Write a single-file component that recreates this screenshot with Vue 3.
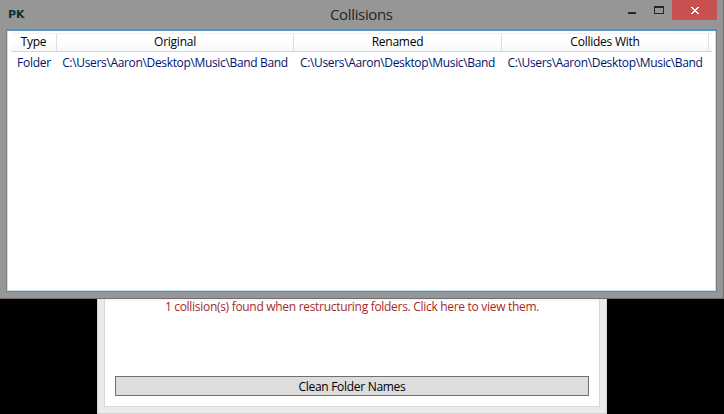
<script setup>
const columns = [
  { title: 'Type', key: 'type', cls: 'c-type' },
  { title: 'Original', key: 'original', cls: 'c-orig' },
  { title: 'Renamed', key: 'renamed', cls: 'c-ren' },
  { title: 'Collides With', key: 'collides', cls: 'c-col' },
]
const rows = [
  {
    type: 'Folder',
    original: 'C:\\Users\\Aaron\\Desktop\\Music\\Band Band',
    renamed: 'C:\\Users\\Aaron\\Desktop\\Music\\Band',
    collides: 'C:\\Users\\Aaron\\Desktop\\Music\\Band',
  },
]
</script>

<template>
  <div class="desktop">
    <section class="window">
      <header class="titlebar">
        <span class="logo">PK</span>
        <h1 class="title">Collisions</h1>
        <div class="controls">
          <svg class="wbtn" width="44" height="20" shape-rendering="crispEdges">
            <rect x="0" y="12" width="8" height="2" fill="#252525" />
            <path d="M26 6h10v8h-10zM27 8v5h8v-5z" fill="#252525" fill-rule="evenodd" />
          </svg>
          <button class="close" aria-label="Close">
            <svg width="8" height="7" shape-rendering="crispEdges" fill="#fff">
              <path d="M0 0h2v1h1v1h2v-1h1v-1h2v1h-1v1h-1v1h-1v1h1v1h1v1h1v1h-2v-1h-1v-1h-2v1h-1v1h-2v-1h1v-1h1v-1h1v-1h-1v-1h-1v-1h-1z" />
            </svg>
          </button>
        </div>
      </header>
      <div class="client">
        <div class="row head">
          <div v-for="c in columns" :key="c.key" class="cell" :class="c.cls"><span>{{ c.title }}</span></div>
        </div>
        <div v-for="(r, i) in rows" :key="i" class="row data">
          <div v-for="c in columns" :key="c.key" class="cell" :class="c.cls"><span>{{ r[c.key] }}</span></div>
        </div>
      </div>
    </section>
    <section class="back">
      <div class="panel">
        <p class="warning">1 collision(s) found when restructuring folders. Click here to view them.</p>
        <button class="clean"><span>Clean Folder Names</span></button>
      </div>
    </section>
  </div>
</template>

<style>
body {
  margin: 0;
  background: #000;
}
</style>

<style scoped>
.desktop {
  width: 724px;
  height: 414px;
  overflow: hidden;
  background: #000;
  font: 12px/16px "Open Sans", "Noto Sans", sans-serif;
  color: #000;
  display: flex;
  flex-direction: column;
}
.desktop * {
  box-sizing: border-box;
}
.window {
  height: 299px;
  flex: none;
  background: #969696;
  border-right: 1px solid #6e6e6e;
  border-bottom: 1px solid #6e6e6e;
  padding: 0 6px;
}
.titlebar {
  height: 29px;
  display: grid;
  grid-template-columns: 324px 1fr 89px;
  align-items: start;
}
.logo {
  padding: 6px 0 0 2px;
  font: 700 11px/18px "DejaVu Sans", sans-serif;
  color: #0a3232;
}
.title {
  margin: 0;
  padding-top: 3px;
  font-weight: 400;
  font-size: 15px;
  line-height: 22px;
  letter-spacing: -0.35px;
  color: #252525;
}
.controls {
  display: flex;
}
.wbtn {
  flex: none;
}
.close {
  width: 45px;
  height: 20px;
  flex: none;
  border: 0;
  padding: 0 0 0 1px;
  background: #c75050;
  display: flex;
  align-items: center;
  justify-content: center;
}
.client {
  height: 263px;
  border: 1px solid #7c7f84;
  background: #fff;
  box-shadow: inset 0 1px #569dcf, inset 0 0 0 1px #c5e0f0;
  padding: 3px 4px;
}
.row {
  display: flex;
}
.head {
  height: 19px;
  width: 701px;
  border-top: 1px solid #f2f2f2;
  border-bottom: 1px solid #d5d5d5;
  background: linear-gradient(#fff 40%, #f7f8fa);
}
.data {
  height: 22px;
  color: #00146e;
}
.cell {
  flex: none;
  display: flex;
  justify-content: center;
  align-items: center;
  white-space: nowrap;
  letter-spacing: -0.25px;
}
.data .cell {
  letter-spacing: -0.34px;
  padding-right: 1px;
}
.data .c-type {
  letter-spacing: -0.25px;
  padding-right: 0;
}
.head .cell {
  border-right: 1px solid #dedfe1;
  padding-bottom: 2px;
}
.c-type {
  width: 46px;
}
.c-orig {
  width: 237px;
}
.c-ren,
.c-col {
  width: 208px;
}
.c-col {
  width: 207px;
}
.back {
  width: 510px;
  height: 115px;
  margin-left: 97px;
  background: #eaeaea;
  border: 1px solid #d3d3d3;
  border-top: 0;
  padding: 0 6px 7px;
}
.panel {
  height: 108px;
  background: linear-gradient(#f4f4f4, #fff 4px);
  border: 1px solid #d9d9d9;
  border-top: 0;
  padding: 0 10px;
}
.warning {
  margin: 0;
  height: 77px;
  text-align: center;
  white-space: nowrap;
  color: #a52a2a;
  letter-spacing: -0.3px;
}
.clean {
  display: block;
  width: 474px;
  height: 20px;
  padding: 2px 0 0;
  border: 1px solid #707070;
  background: #ddd;
  color: #000;
  font: inherit;
  letter-spacing: -0.3px;
}
</style>
